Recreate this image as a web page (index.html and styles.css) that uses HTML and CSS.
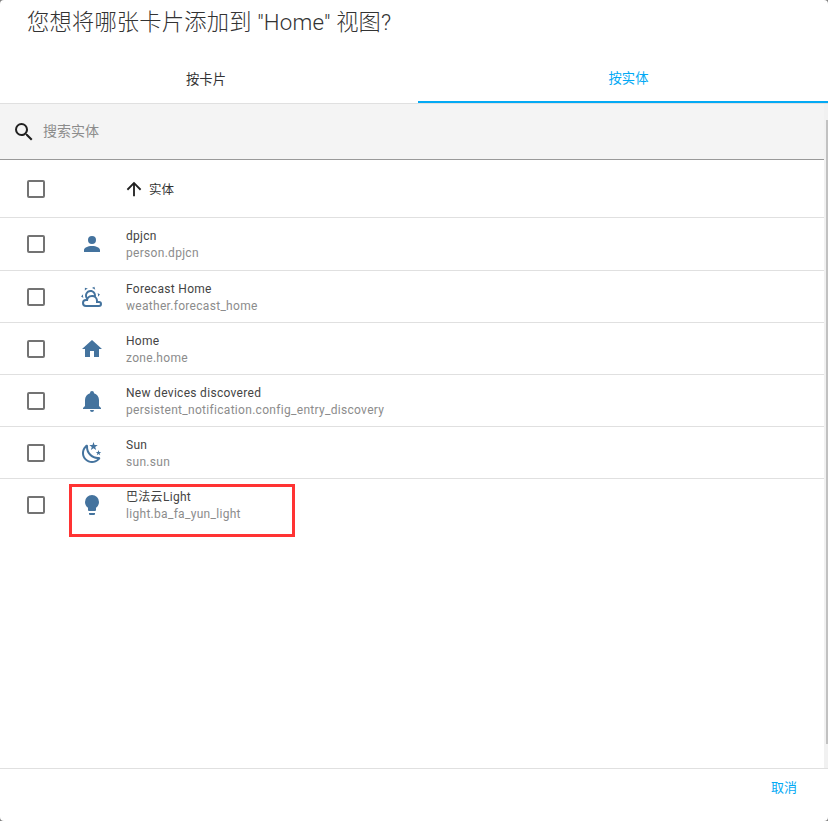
FILE: index.html
```html
<!DOCTYPE html>
<html lang="zh-CN">
<head>
    <meta charset="UTF-8">
    <title>Add card</title>
    <link rel="stylesheet" href="styles.css">
</head>
<body>
    <div class="dialog">
        <h2 class="title">您想将哪张卡片添加到 "Home" 视图?</h2>

        <div class="tabs">
            <div class="tab first">按卡片</div>
            <div class="tab active">按实体</div>
        </div>

        <div class="content">
            <div class="main">
                <div class="search">
                    <svg class="search-icon" viewBox="0 0 24 24"><path d="M9.5,3A6.5,6.5 0 0,1 16,9.5C16,11.11 15.41,12.59 14.44,13.73L14.71,14H15.5L20.5,19L19,20.5L14,15.5V14.71L13.73,14.44C12.59,15.41 11.11,16 9.5,16A6.5,6.5 0 0,1 3,9.5A6.5,6.5 0 0,1 9.5,3M9.5,5C7,5 5,7 5,9.5C5,12 7,14 9.5,14C12,14 14,12 14,9.5C14,7 12,5 9.5,5Z"/></svg>
                    <span class="search-label">搜索实体</span>
                </div>

                <div class="row head">
                    <div class="check"></div>
                    <div class="icon-cell"></div>
                    <svg class="sort-icon" viewBox="0 0 24 24"><path d="M13,20H11V8L5.5,13.5L4.08,12.08L12,4.16L19.92,12.08L18.5,13.5L13,8V20Z"/></svg>
                    <span class="head-label">实体</span>
                </div>

                <div class="row first-row">
                    <div class="check"></div>
                    <div class="icon-cell"><svg viewBox="0 0 24 24"><path d="M12,4A4,4 0 0,1 16,8A4,4 0 0,1 12,12A4,4 0 0,1 8,8A4,4 0 0,1 12,4M12,14C16.42,14 20,15.79 20,18V20H4V18C4,15.79 7.58,14 12,14Z"/></svg></div>
                    <div class="info"><div class="name">dpjcn</div><div class="entity">person.dpjcn</div></div>
                </div>
                <div class="row">
                    <div class="check"></div>
                    <div class="icon-cell"><svg viewBox="0 0 24 24"><path d="M12.74,5.47C15.1,6.5 16.35,9.03 15.92,11.46C17.19,12.56 18,14.19 18,16V16.17C18.31,16.06 18.65,16 19,16A3,3 0 0,1 22,19A3,3 0 0,1 19,22H6A4,4 0 0,1 2,18A4,4 0 0,1 6,14H6.27C5,12.45 4.6,10.24 5.5,8.26C6.72,5.5 9.97,4.24 12.74,5.47M11.93,7.3C10.16,6.5 8.09,7.31 7.31,9.07C6.85,10.09 6.93,11.22 7.41,12.13C8.5,10.83 10.16,10 12,10C12.7,10 13.38,10.12 14,10.34C13.94,9.06 13.18,7.86 11.93,7.3M13.55,3.64C13,3.4 12.45,3.23 11.88,3.12L14.37,1.82L15.27,4.71C14.76,4.29 14.19,3.93 13.55,3.64M6.09,4.44C5.6,4.79 5.17,5.19 4.8,5.63L4.91,2.82L7.87,3.5C7.25,3.71 6.65,4.03 6.09,4.44M18,9.71C17.91,9.12 17.78,8.55 17.59,8L19.97,9.5L17.92,11.73C18.03,11.08 18.05,10.4 18,9.71M3.04,11.3C3.11,11.9 3.24,12.47 3.43,13L1.06,11.5L3.1,9.28C3,9.93 2.97,10.61 3.04,11.3M19,18H16V16A4,4 0 0,0 12,12A4,4 0 0,0 8,16H6A2,2 0 0,0 4,18A2,2 0 0,0 6,20H19A1,1 0 0,0 20,19A1,1 0 0,0 19,18Z"/></svg></div>
                    <div class="info"><div class="name">Forecast Home</div><div class="entity">weather.forecast_home</div></div>
                </div>
                <div class="row">
                    <div class="check"></div>
                    <div class="icon-cell"><svg viewBox="0 0 24 24"><path d="M10,20V14H14V20H19V12H22L12,3L2,12H5V20H10Z"/></svg></div>
                    <div class="info"><div class="name">Home</div><div class="entity">zone.home</div></div>
                </div>
                <div class="row">
                    <div class="check"></div>
                    <div class="icon-cell"><svg viewBox="0 0 24 24"><path d="M21,19V20H3V19L5,17V11C5,7.9 7.03,5.17 10,4.29C10,4.19 10,4.1 10,4A2,2 0 0,1 12,2A2,2 0 0,1 14,4C14,4.1 14,4.19 14,4.29C16.97,5.17 19,7.9 19,11V17L21,19M14,21A2,2 0 0,1 12,23A2,2 0 0,1 10,21"/></svg></div>
                    <div class="info"><div class="name">New devices discovered</div><div class="entity">persistent_notification.config_entry_discovery</div></div>
                </div>
                <div class="row">
                    <div class="check"></div>
                    <div class="icon-cell"><svg viewBox="0 0 24 24"><path d="M17.75,4.09L15.22,6.03L16.13,9.09L13.5,7.28L10.87,9.09L11.78,6.03L9.25,4.09L12.44,4L13.5,1L14.56,4L17.75,4.09M21.25,11L19.61,12.25L20.2,14.23L18.5,13.06L16.8,14.23L17.39,12.25L15.75,11L17.81,10.95L18.5,9L19.19,10.95L21.25,11M18.97,15.95C19.8,15.87 20.69,17.05 20.16,17.8C19.84,18.25 19.5,18.67 19.08,19.07C15.17,23 8.84,23 4.94,19.07C1.03,15.17 1.03,8.83 4.94,4.93C5.34,4.53 5.76,4.17 6.21,3.85C6.96,3.32 8.14,4.21 8.06,5.04C7.79,7.9 8.75,10.87 10.95,13.06C13.14,15.26 16.1,16.22 18.97,15.95M17.33,17.97C14.5,17.81 11.7,16.64 9.53,14.5C7.36,12.31 6.2,9.5 6.04,6.68C3.23,9.82 3.34,14.64 6.35,17.66C9.37,20.67 14.19,20.78 17.33,17.97Z"/></svg></div>
                    <div class="info"><div class="name">Sun</div><div class="entity">sun.sun</div></div>
                </div>
                <div class="row last">
                    <div class="check"></div>
                    <div class="icon-cell"><svg viewBox="0 0 24 24"><path d="M12,2A7,7 0 0,0 5,9C5,11.38 6.19,13.47 8,14.74V17A1,1 0 0,0 9,18H15A1,1 0 0,0 16,17V14.74C17.81,13.47 19,11.38 19,9A7,7 0 0,0 12,2M9,21A1,1 0 0,0 10,22H14A1,1 0 0,0 15,21V20H9V21Z"/></svg></div>
                    <div class="info"><div class="name">巴法云Light</div><div class="entity">light.ba_fa_yun_light</div></div>
                    <div class="highlight"></div>
                </div>
            </div>
            <div class="scrollbar"><div class="thumb"></div></div>
        </div>

        <div class="footer">
            <span class="cancel">取消</span>
        </div>
    </div>
</body>
</html>
```

FILE: styles.css
```css
* {
    box-sizing: border-box;
}

html, body {
    margin: 0;
    height: 821px;
    overflow: hidden;
}

body {
    background: #7f7f7f;
    font-family: Roboto, "Noto Sans CJK SC", sans-serif;
    color: #212121;
}

.dialog {
    height: 821px;
    display: flex;
    flex-direction: column;
    background: #fff;
    border-radius: 4px;
}

.title {
    margin: 0;
    height: 55px;
    padding: 6px 0 0 27px;
    font-size: 22.3px;
    line-height: 32px;
    font-weight: 300;
    letter-spacing: 0.17px;
    color: #333;
}

.tabs {
    display: flex;
    height: 49px;
    border-bottom: 1px solid #e0e0e0;
}

.tab {
    display: flex;
    align-items: center;
    justify-content: center;
    height: 48px;
    padding-bottom: 1px;
    font-size: 13.3px;
    color: #333;
}

.tab.first {
    width: 418px;
    padding-right: 6px;
}

.tab.active {
    width: 410px;
    padding-left: 11px;
    color: #03a9f4;
    border-bottom: 2px solid #03a9f4;
}

.content {
    flex: 1;
    display: flex;
    min-height: 0;
}

.main {
    flex: 1;
    min-width: 0;
}

.search {
    display: flex;
    align-items: center;
    height: 56px;
    padding-left: 12px;
    background: #f4f4f4;
    border-bottom: 1px solid #999;
    font-size: 14px;
    color: #8c8c8c;
}

.search-icon {
    width: 24px;
    height: 24px;
    margin-right: 7px;
    fill: #212121;
}

.search-label {
    padding-bottom: 4px;
}

.row {
    position: relative;
    display: flex;
    align-items: center;
    height: 52px;
    padding-left: 27px;
    border-bottom: 1px solid #e0e0e0;
}

.row.head {
    height: 58px;
}

.row.first-row {
    height: 53px;
}

.row.last {
    border-bottom: none;
}

.check {
    width: 18px;
    height: 18px;
    border: 2px solid #737373;
    border-radius: 2px;
    flex-shrink: 0;
}

.icon-cell {
    width: 81px;
    height: 24px;
    padding-left: 35px;
    flex-shrink: 0;
}

.icon-cell svg {
    display: block;
    width: 24px;
    height: 24px;
    fill: #44739e;
}

.sort-icon {
    width: 22px;
    height: 22px;
    margin: 0 4px 0 -3px;
    flex-shrink: 0;
    fill: #212121;
}

.head-label {
    font-size: 12.5px;
    color: #333;
}

.info {
    padding-top: 2px;
    line-height: 17px;
}

.name {
    font-size: 12px;
    letter-spacing: 0.3px;
    color: #444;
}

.entity {
    font-size: 12px;
    letter-spacing: 0.3px;
    color: #8c8c8c;
}

.highlight {
    position: absolute;
    left: 69px;
    top: 5px;
    width: 226px;
    height: 53px;
    border: 3px solid #ff3333;
}

.scrollbar {
    width: 4px;
    background: #f1f1f1;
    padding: 16px 0 24px 2px;
}

.thumb {
    height: 100%;
    background: #c1c1c1;
}

.footer {
    height: 53px;
    display: flex;
    justify-content: flex-end;
    padding: 10px 31px 0 0;
    border-top: 1px solid #e0e0e0;
}

.cancel {
    font-size: 13px;
    line-height: 18px;
    color: #03a9f4;
}
```
